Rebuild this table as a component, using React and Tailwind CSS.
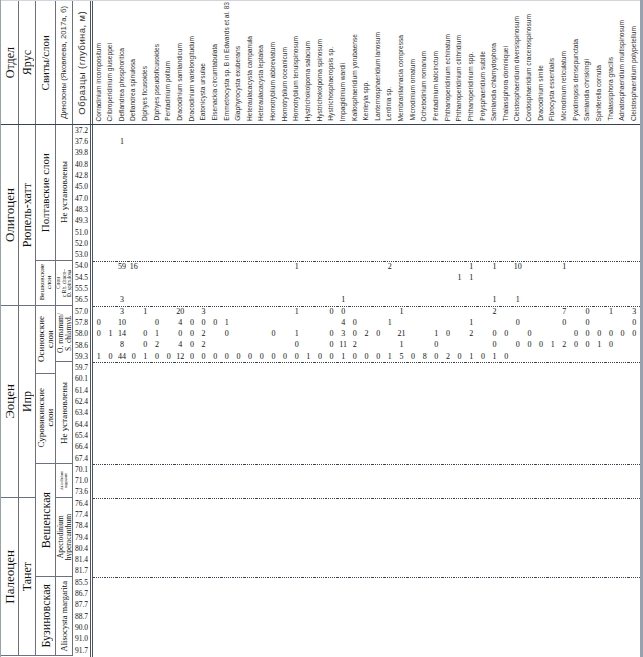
const species = [
  "Corradinium incompositum",
  "Cribroperidinium giuseppei",
  "Deflandrea phosphoritica",
  "Deflandrea spinulosa",
  "Diphyes ficusoides",
  "Diphyes pseudoficusoides",
  "Pentadinium politum",
  "Dracodinium samlandicum",
  "Dracodinium varielongitudum",
  "Eatonicysta ursulae",
  "Eisenackia circumtabulata",
  "Emmetrocysta sp. B in Edwards et al. 83",
  "Glaphyrocysta exuberans",
  "Heteraulacacysta campanula",
  "Heteraulacacysta leptalea",
  "Homotryblium abbreviatum",
  "Homotryblium oceanicum",
  "Homotryblium tenuispinosum",
  "Hystrichokolpoma salacium",
  "Hystrichokolpoma spinosum",
  "Hystrichosphaeropsis sp.",
  "Impagidinium wardii",
  "Kallosphaeridium yorubaense",
  "Kenleyia spp.",
  "Lanternosphaeridium lanosum",
  "Lentinia sp.",
  "Membranilarnacia compressa",
  "Microdinium ornatum",
  "Ochetodinium romanum",
  "Pentadinium laticinctum",
  "Phthanoperidinium echinatum",
  "Phthanoperidinium clithridium",
  "Phthanoperidinium spp.",
  "Polysphaeridium subtile",
  "Samlandia chlamydophora",
  "Thalassiphora dominiquei",
  "Cleistosphaeridium diversispinosum",
  "Cordosphaeridium cracenospinosum",
  "Dracodinium simile",
  "Fibrocysta essentialis",
  "Microdinium reticulatum",
  "Pyxidinopsis densepunctata",
  "Samlandia chriskingii",
  "Spiniferella cornuta",
  "Thalassiphora gracilis",
  "Adnatosphaeridium multispinosum",
  "Cleistosphaeridium polypetellum",
];

const depths = [
  "37.2", "37.6", "39.8", "40.8", "42.8", "45.0", "47.0", "48.3", "49.3", "51.0", "52.0", "53.0",
  "54.0", "54.5", "55.5", "56.5",
  "57.0", "57.8", "58.0", "58.6", "59.3",
  "59.7", "60.1", "61.4", "62.4", "63.4", "64.4", "65.4", "66.4", "67.4",
  "70.1", "71.0", "73.6",
  "76.4", "77.4", "78.4", "79.4", "80.4", "81.4", "81.7",
  "85.5", "86.7", "87.7", "88.7", "90.0", "91.0", "91.7",
];

// counts per sample row: { column (1-based): value }
const counts = {
  1: { 3: "1" },
  12: { 3: "59", 4: "16", 18: "1", 26: "2", 33: "1", 35: "1", 37: "10", 41: "1" },
  13: { 32: "1", 33: "1" },
  15: { 3: "3", 22: "1", 35: "1", 37: "1" },
  16: { 3: "3", 5: "1", 8: "20", 10: "3", 18: "1", 21: "0", 22: "0", 27: "1", 35: "2", 41: "7", 43: "0", 45: "1", 47: "3" },
  17: { 1: "0", 3: "10", 6: "0", 8: "4", 9: "0", 10: "0", 11: "0", 12: "1", 22: "4", 23: "0", 26: "1", 33: "1", 37: "0", 41: "0", 43: "0", 47: "0" },
  18: {
    1: "0", 2: "1", 3: "14", 5: "0", 6: "1", 8: "0", 9: "0", 10: "2", 12: "0", 16: "0", 18: "1",
    21: "0", 22: "3", 23: "0", 24: "2", 25: "0", 27: "21", 30: "1", 31: "0", 33: "2",
    35: "0", 36: "0", 38: "0", 42: "0", 43: "0", 44: "0", 45: "0", 46: "0", 47: "0",
  },
  19: {
    3: "8", 5: "0", 6: "2", 8: "4", 9: "0", 10: "2", 18: "0", 21: "0", 22: "11", 23: "2", 27: "1", 30: "0",
    35: "0", 37: "0", 38: "0", 39: "0", 40: "1", 41: "2", 42: "0", 43: "0", 44: "1", 45: "0",
  },
  20: {
    1: "1", 2: "0", 3: "44", 4: "0", 5: "1", 6: "0", 7: "0", 8: "12", 9: "0", 10: "0", 11: "0", 12: "0",
    13: "0", 14: "0", 15: "0", 16: "0", 17: "0", 18: "0", 19: "1", 20: "0", 21: "0", 22: "1", 23: "0",
    24: "0", 25: "0", 26: "1", 27: "5", 28: "0", 29: "8", 30: "0", 31: "2", 32: "0", 33: "1", 34: "0",
    35: "1", 36: "0",
  },
};

const dottedRows = new Set([12, 16, 21, 30, 33, 40]);

const units = [
  // Отдел
  { cls: "col-start-1 row-start-1 row-span-16", text: ["Олигоцен"], size: "text-[13px]" },
  { cls: "col-start-1 row-start-17 row-span-17", text: ["Эоцен"], size: "text-[13px]" },
  { cls: "col-start-1 row-start-34 row-span-14", text: ["Палеоцен"], size: "text-[13px]" },
  // Ярус
  { cls: "col-start-2 row-start-1 row-span-16", text: ["Рюпель-хатт"], size: "text-[12px]" },
  { cls: "col-start-2 row-start-17 row-span-17", text: ["Ипр"], size: "text-[12px]" },
  { cls: "col-start-2 row-start-34 row-span-14", text: ["Танет"], size: "text-[12px]" },
  // Свиты/слои
  { cls: "col-start-3 row-start-1 row-span-12", text: ["Полтавские слои"], size: "text-[11px]" },
  { cls: "col-start-3 row-start-13 row-span-4", text: ["Вешковские", "слои"], size: "text-[7px]" },
  { cls: "col-start-3 row-start-17 row-span-6", text: ["Осиновские", "слои"], size: "text-[9px]" },
  { cls: "col-start-3 row-start-23 row-span-8", text: ["Суровикинские", "слои"], size: "text-[9px]" },
  { cls: "col-start-3 row-start-31 row-span-10", text: ["Вешенская"], size: "text-[12px]" },
  { cls: "col-start-3 row-start-41 row-span-7", text: ["Бузиновская"], size: "text-[12px]" },
  // Динозоны
  { cls: "col-start-4 row-start-1 row-span-12", text: ["Не установлены"], size: "text-[9px]" },
  { cls: "col-start-4 row-start-13 row-span-4", text: ["Слои", "с Rh. draco–", "D. spinulosa"], size: "text-[5.5px]" },
  { cls: "col-start-4 row-start-17 row-span-5", text: ["O. romanum/", "S. chlamyd."], size: "text-[7.5px]" },
  { cls: "col-start-4 row-start-22 row-span-9", text: ["Не установлены"], size: "text-[9px]" },
  { cls: "col-start-4 row-start-31 row-span-3", text: ["Axiodinium", "augustum"], size: "text-[4px]" },
  { cls: "col-start-4 row-start-34 row-span-7", text: ["Apectodinium", "hyperacanthum"], size: "text-[7.5px]" },
  { cls: "col-start-4 row-start-41 row-span-7", text: ["Alisocysta margarita"], size: "text-[8.5px]" },
];

function Vertical({ lines, className = "" }) {
  return (
    <span className={`[writing-mode:vertical-rl] rotate-180 whitespace-nowrap text-center ${className}`}>
      {lines.map((l, i) => (
        <span key={i} className="block">
          {l}
        </span>
      ))}
    </span>
  );
}

export default function App() {
  return (
    <div className="h-[657px] w-[643px] overflow-hidden border-r-[3px] border-l border-gray-400 bg-white font-['Liberation_Serif',serif] text-[#111]">
      {/* header */}
      <div className="flex h-[125px] border-t border-b border-t-gray-300 border-b-gray-700">
        <div className="flex w-[18px] items-center justify-center border-r border-gray-500">
          <Vertical lines={["Отдел"]} className="text-[12px] leading-none" />
        </div>
        <div className="flex w-[17px] items-center justify-center border-r border-gray-500">
          <Vertical lines={["Ярус"]} className="text-[12px] leading-none" />
        </div>
        <div className="flex w-[20px] items-center justify-center border-r border-gray-500">
          <Vertical lines={["Свиты/слои"]} className="text-[11px] leading-none" />
        </div>
        <div className="flex w-[17px] items-center justify-center border-r border-gray-500">
          <Vertical
            lines={["Динозоны (Яковлева, 2017а, б)"]}
            className="font-['Liberation_Sans',sans-serif] text-[7.8px] leading-none text-[#333]"
          />
        </div>
        <div className="flex w-[20px] items-center justify-center border-r-[3px] border-double border-gray-600">
          <Vertical
            lines={["Образцы (глубина, м)"]}
            className="font-['Liberation_Sans',sans-serif] text-[9.5px] leading-none tracking-[0.4px] text-[#333]"
          />
        </div>
        <div className="grid flex-1 grid-cols-[repeat(47,minmax(0,1fr))]">
          {species.map((s) => (
            <div key={s} className="flex items-end justify-center pb-[3px]">
              <Vertical
                lines={[s]}
                className="font-['Liberation_Sans',sans-serif] text-[6.6px] leading-none text-[#333]"
              />
            </div>
          ))}
        </div>
      </div>

      {/* body */}
      <div className="flex h-[532px]">
        <div className="grid w-[72px] grid-cols-[18px_17px_20px_17px] grid-rows-[repeat(47,11.3px)]">
          {units.map((u, i) => (
            <div
              key={i}
              className={`flex items-center justify-center overflow-hidden border-r border-b border-gray-500 ${u.cls}`}
            >
              <Vertical lines={u.text} className={`${u.size} leading-none`} />
            </div>
          ))}
        </div>

        <div className="flex w-[20px] flex-col border-r-[3px] border-double border-gray-600">
          {depths.map((d) => (
            <div key={d} className="flex h-[11.3px] shrink-0 items-center justify-center text-[7.5px] leading-none">
              {d}
            </div>
          ))}
        </div>

        <div className="grid flex-1 grid-cols-[repeat(47,minmax(0,1fr))] grid-rows-[repeat(47,11.3px)]">
          {depths.map((d, r) =>
            species.map((s, c) => {
              const v = counts[r]?.[c + 1];
              return (
                <div
                  key={`${r}-${c}`}
                  className={`flex items-center justify-center text-[8px] leading-none ${
                    dottedRows.has(r) ? "border-t border-dotted border-gray-700" : ""
                  }`}
                >
                  {v}
                </div>
              );
            })
          )}
        </div>
      </div>
    </div>
  );
}
